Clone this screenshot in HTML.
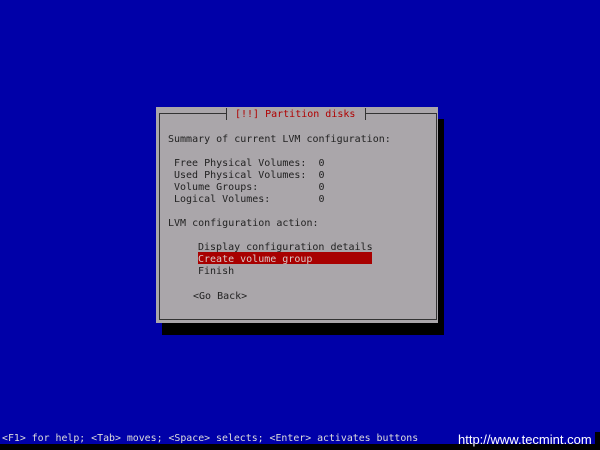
<!DOCTYPE html>
<html><head><style>
body{margin:0;width:600px;height:450px;background:#0000a8;position:relative;overflow:hidden;font-family:"DejaVu Sans Mono","Liberation Mono",monospace;font-size:10px;}
.a{position:absolute;white-space:pre;line-height:12px;color:#222;}
</style></head><body>
<div style="position:absolute;left:162px;top:119px;width:282px;height:216px;background:#000"></div>
<div style="position:absolute;left:156px;top:107px;width:282px;height:216px;background:#aaa6aa"></div>
<div style="position:absolute;left:159px;top:113px;width:276px;height:205px;border:1px solid #333"></div>
<div style="position:absolute;left:226px;top:108px;width:138px;height:12px;background:#aaa6aa;border-left:1px solid #333;border-right:1px solid #333"></div>
<div class="a" style="left:235px;top:109px;color:#b00000">[!!] Partition disks</div>
<div class="a" style="left:168px;top:134px">Summary of current LVM configuration:</div>
<div class="a" style="left:174px;top:158px">Free Physical Volumes:  0
Used Physical Volumes:  0
Volume Groups:          0
Logical Volumes:        0</div>
<div class="a" style="left:168px;top:218px">LVM configuration action:</div>
<div style="position:absolute;left:198px;top:252px;width:174px;height:12px;background:#a80000"></div>
<div class="a" style="left:198px;top:242px">Display configuration details</div>
<div class="a" style="left:198px;top:254px;color:#d8c8c8">Create volume group</div>
<div class="a" style="left:198px;top:266px">Finish</div>
<div class="a" style="left:193px;top:291px">&lt;Go Back&gt;</div>
<div style="position:absolute;left:0;top:444px;width:600px;height:6px;background:#000"></div>
<div style="position:absolute;left:595px;top:432px;width:5px;height:18px;background:#000"></div>
<div class="a" style="left:2px;top:433px;color:#ddd;font-size:9.9px">&lt;F1&gt; for help; &lt;Tab&gt; moves; &lt;Space&gt; selects; &lt;Enter&gt; activates buttons</div>
<div class="a" style="left:458px;top:432px;color:#fff;font-family:'Liberation Sans',sans-serif;font-size:13px;line-height:15px">http://www.tecmint.com</div>
</body></html>
